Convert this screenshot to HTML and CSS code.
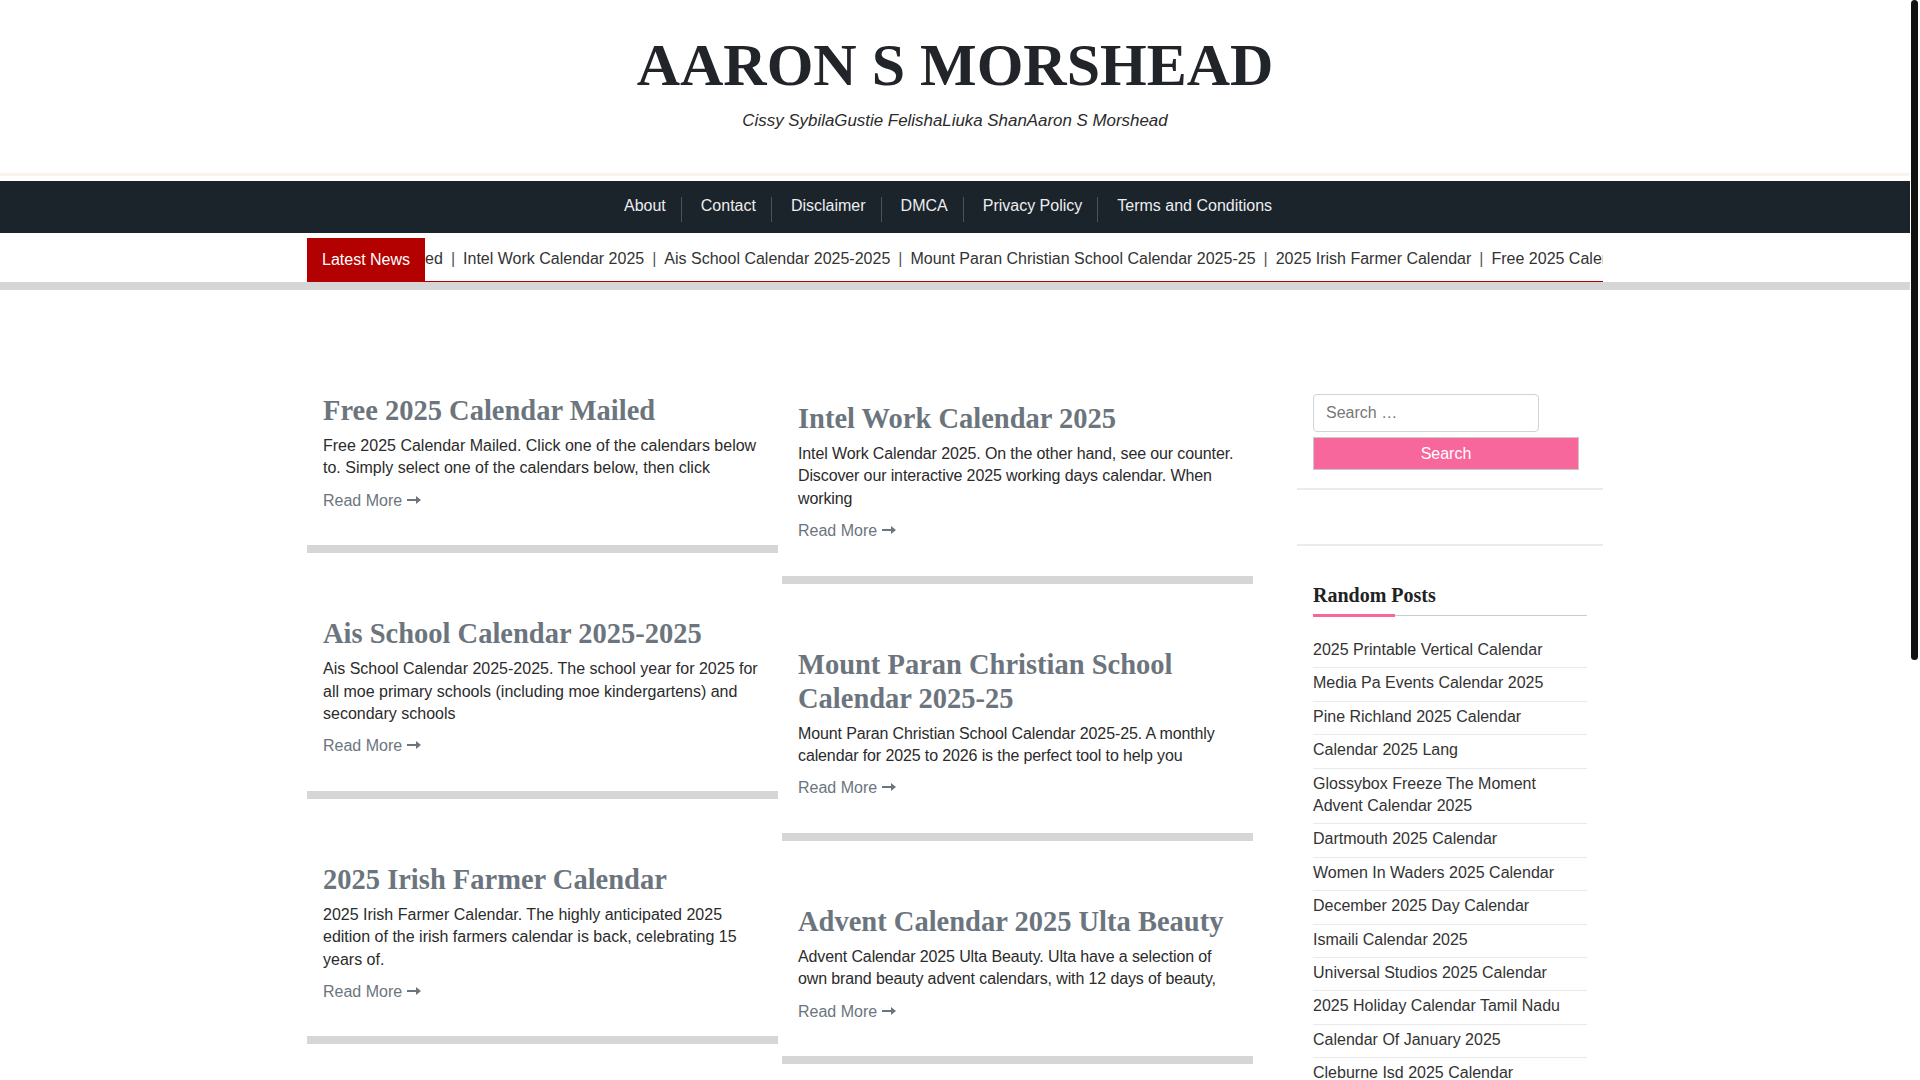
FILE: index.html
```html
<!DOCTYPE html>
<html lang="en">
<head>
<meta charset="utf-8">
<title>AARON S MORSHEAD</title>
<link rel="stylesheet" href="styles.css">
</head>
<body>
<div class="scroll-thumb"></div>
<header class="site-header">
  <h1 class="site-title">AARON S MORSHEAD</h1>
  <p class="site-tagline">Cissy SybilaGustie FelishaLiuka ShanAaron S Morshead</p>
</header>

<nav class="main-nav">
  <ul class="menu">
    <li><a href="#">About</a></li>
    <li><a href="#">Contact</a></li>
    <li><a href="#">Disclaimer</a></li>
    <li><a href="#">DMCA</a></li>
    <li><a href="#">Privacy Policy</a></li>
    <li><a href="#">Terms and Conditions</a></li>
  </ul>
</nav>

<div class="ticker-band">
  <div class="container ticker">
    <span class="ticker-label">Latest News</span>
    <div class="ticker-track">
      <a href="#">Free 2025 Calendar Mailed</a><span class="sep">|</span><a href="#">Intel Work Calendar 2025</a><span class="sep">|</span><a href="#">Ais School Calendar 2025-2025</a><span class="sep">|</span><a href="#">Mount Paran Christian School Calendar 2025-25</a><span class="sep">|</span><a href="#">2025 Irish Farmer Calendar</a><span class="sep">|</span><a href="#">Free 2025 Calendar Mailed</a><span class="sep">|</span><a href="#">Intel Work Calendar 2025</a>
    </div>
  </div>
</div>

<div class="container content">
  <main class="posts">
    <div class="post-col">
      <article class="card">
        <h2 class="card-title">Free 2025 Calendar Mailed</h2>
        <p class="card-excerpt">Free 2025 Calendar Mailed. Click one of the calendars below to. Simply select one of the calendars below, then click</p>
        <a class="read-more" href="#">Read More<svg class="arrow" width="14" height="8" viewBox="0 0 14 8"><path d="M0 3h9V0l5 4-5 4V5H0z"/></svg></a>
      </article>
      <article class="card">
        <h2 class="card-title">Ais School Calendar 2025-2025</h2>
        <p class="card-excerpt">Ais School Calendar 2025-2025. The school year for 2025 for all moe primary schools (including moe kindergartens) and secondary schools</p>
        <a class="read-more" href="#">Read More<svg class="arrow" width="14" height="8" viewBox="0 0 14 8"><path d="M0 3h9V0l5 4-5 4V5H0z"/></svg></a>
      </article>
      <article class="card">
        <h2 class="card-title">2025 Irish Farmer Calendar</h2>
        <p class="card-excerpt">2025 Irish Farmer Calendar. The highly anticipated 2025 edition of the irish farmers calendar is back, celebrating 15 years of.</p>
        <a class="read-more" href="#">Read More<svg class="arrow" width="14" height="8" viewBox="0 0 14 8"><path d="M0 3h9V0l5 4-5 4V5H0z"/></svg></a>
      </article>
      <article class="card">
        <h2 class="card-title">Dartmouth 2025 Calendar</h2>
        <p class="card-excerpt">Dartmouth 2025 Calendar. View the academic calendar, important dates and deadlines for the year ahead.</p>
        <a class="read-more" href="#">Read More<svg class="arrow" width="14" height="8" viewBox="0 0 14 8"><path d="M0 3h9V0l5 4-5 4V5H0z"/></svg></a>
      </article>
    </div>
    <div class="post-col shifted">
      <article class="card">
        <h2 class="card-title">Intel Work Calendar 2025</h2>
        <p class="card-excerpt">Intel Work Calendar 2025. On the other hand, see our counter. Discover our interactive 2025 working days calendar. When working</p>
        <a class="read-more" href="#">Read More<svg class="arrow" width="14" height="8" viewBox="0 0 14 8"><path d="M0 3h9V0l5 4-5 4V5H0z"/></svg></a>
      </article>
      <article class="card">
        <h2 class="card-title">Mount Paran Christian School Calendar 2025-25</h2>
        <p class="card-excerpt">Mount Paran Christian School Calendar 2025-25. A monthly calendar for 2025 to 2026 is the perfect tool to help you</p>
        <a class="read-more" href="#">Read More<svg class="arrow" width="14" height="8" viewBox="0 0 14 8"><path d="M0 3h9V0l5 4-5 4V5H0z"/></svg></a>
      </article>
      <article class="card">
        <h2 class="card-title">Advent Calendar 2025 Ulta Beauty</h2>
        <p class="card-excerpt">Advent Calendar 2025 Ulta Beauty. Ulta have a selection of own brand beauty advent calendars, with 12 days of beauty,</p>
        <a class="read-more" href="#">Read More<svg class="arrow" width="14" height="8" viewBox="0 0 14 8"><path d="M0 3h9V0l5 4-5 4V5H0z"/></svg></a>
      </article>
      <article class="card">
        <h2 class="card-title">Ismaili Calendar 2025</h2>
        <p class="card-excerpt">Ismaili Calendar 2025. Find all the important dates, festivals and observances for the coming year.</p>
        <a class="read-more" href="#">Read More<svg class="arrow" width="14" height="8" viewBox="0 0 14 8"><path d="M0 3h9V0l5 4-5 4V5H0z"/></svg></a>
      </article>
    </div>
  </main>

  <aside class="sidebar">
    <section class="widget widget-search">
      <form class="search-form">
        <input class="search-field" type="search" placeholder="Search …">
        <button class="search-submit" type="button">Search</button>
      </form>
    </section>
    <section class="widget widget-empty"></section>
    <section class="widget widget-random">
      <h3 class="widget-title">Random Posts</h3>
      <ul class="random-list">
        <li><a href="#">2025 Printable Vertical Calendar</a></li>
        <li><a href="#">Media Pa Events Calendar 2025</a></li>
        <li><a href="#">Pine Richland 2025 Calendar</a></li>
        <li><a href="#">Calendar 2025 Lang</a></li>
        <li><a href="#">Glossybox Freeze The Moment Advent Calendar 2025</a></li>
        <li><a href="#">Dartmouth 2025 Calendar</a></li>
        <li><a href="#">Women In Waders 2025 Calendar</a></li>
        <li><a href="#">December 2025 Day Calendar</a></li>
        <li><a href="#">Ismaili Calendar 2025</a></li>
        <li><a href="#">Universal Studios 2025 Calendar</a></li>
        <li><a href="#">2025 Holiday Calendar Tamil Nadu</a></li>
        <li><a href="#">Calendar Of January 2025</a></li>
        <li><a href="#">Cleburne Isd 2025 Calendar</a></li>
        <li><a href="#">Free 2025 Calendar Mailed</a></li>
        <li><a href="#">Intel Work Calendar 2025</a></li>
      </ul>
    </section>
  </aside>
</div>
</body>
</html>
```

FILE: styles.css
```css
::-webkit-scrollbar {
  width: 10px;
}
::-webkit-scrollbar-track {
  background: #ffffff;
}
::-webkit-scrollbar-thumb {
  background: #111111;
  border-radius: 5px;
}

body {
  margin: 0;
  padding-right: 10px;
  background: #ffffff;
  color: #333333;
  font-family: "Liberation Sans", Arial, sans-serif;
  font-size: 16px;
}

a {
  text-decoration: none;
}

/* drawn scrollbar thumb, over the page edge */
.scroll-thumb {
  position: fixed;
  top: 0;
  right: 2px;
  z-index: 10;
  width: 7px;
  height: 660px;
  background: #111111;
  border-radius: 4px;
}

.container {
  width: 1296px;
  margin: 0 auto;
}

/* Header */
.site-header {
  text-align: center;
  padding: 29px 0 40px;
  border-bottom: 3px solid #faf5ec;
}

.site-title {
  margin: 0;
  font-family: "Liberation Serif", "Times New Roman", serif;
  font-weight: bold;
  font-size: 60px;
  line-height: 72px;
  color: #212529;
}

.site-tagline {
  margin: 8px 0 0;
  font-style: italic;
  font-size: 16.9px;
  line-height: 24px;
  color: #2b2b2b;
}

/* Navigation */
.main-nav {
  margin-top: 5px;
  height: 52px;
  box-sizing: border-box;
  padding-top: 16px;
  background: #1b232b;
}

.menu {
  list-style: none;
  margin: 0;
  padding: 0 18px 0 0;
  display: flex;
  justify-content: center;
}

.menu li {
  border-right: 1px solid #49515a;
  padding-bottom: 7px;
  line-height: 18px;
}

.menu li:last-child {
  border-right: none;
}

.menu a {
  display: block;
  padding: 0 15px 0 19px;
  color: #eceef0;
  font-size: 16px;
}

/* Ticker */
.ticker-band {
  margin-top: 5px;
  border-bottom: 8px solid #d6d6d6;
}

.ticker {
  position: relative;
  height: 43px;
  overflow: hidden;
  border-bottom: 1px solid #b30000;
}

.ticker-label {
  position: absolute;
  left: 0;
  top: 0;
  z-index: 2;
  height: 43px;
  padding: 0 15px;
  line-height: 43px;
  background: #b30000;
  color: #ffffff;
  font-size: 16px;
}

.ticker-track {
  white-space: nowrap;
  line-height: 42px;
  font-size: 16px;
  transform: translateX(-58px);
}

.ticker-track a {
  color: #333333;
}

.ticker-track .sep {
  margin: 0 8px;
  color: #555555;
}

/* Content */
.content {
  display: flex;
  align-items: flex-start;
  padding-top: 71px;
}

.posts {
  width: 946px;
  display: flex;
  gap: 4px;
  align-items: flex-start;
}

.post-col {
  width: 471px;
}

.post-col.shifted {
  margin-top: 8px;
}

.card {
  padding: 33px 16px;
  border-bottom: 8px solid #d6d6d6;
  margin-bottom: 31px;
}

.card-title {
  margin: 0 0 7px;
  font-family: "Liberation Serif", "Times New Roman", serif;
  font-weight: bold;
  font-size: 28.5px;
  line-height: 34px;
  color: #6c757d;
}

.card-excerpt {
  margin: 0 0 10px;
  font-size: 16px;
  line-height: 22.4px;
  color: #2b2b2b;
}

.post-col.shifted .card-excerpt {
  letter-spacing: -0.12px;
}

.read-more {
  display: block;
  font-size: 16px;
  line-height: 22.4px;
  color: #6c757d;
}

.read-more .arrow {
  margin-left: 5px;
  vertical-align: 2px;
  fill: #6c757d;
}

/* Sidebar */
.sidebar {
  width: 306px;
  margin-left: auto;
}

.widget-search {
  padding: 33px 16px 18px;
  border-bottom: 2px solid #ebebeb;
}

.search-form {
  margin: 0;
}

.search-field {
  display: block;
  box-sizing: border-box;
  width: 226px;
  height: 38px;
  margin: 0;
  padding: 0 12px;
  border: 1px solid #ced4da;
  border-radius: 4px;
  font-family: "Liberation Sans", Arial, sans-serif;
  font-size: 16px;
  color: #333333;
  background: #ffffff;
}

.search-field::placeholder {
  color: #777777;
}

.search-submit {
  display: block;
  box-sizing: border-box;
  width: 266px;
  height: 33px;
  margin: 5px 0 0;
  padding: 0;
  border: 1px solid #c9c9c9;
  background: #f8679b;
  color: #ffffff;
  font-family: "Liberation Sans", Arial, sans-serif;
  font-size: 16px;
}

.widget-empty {
  height: 54px;
  border-bottom: 2px solid #ebebeb;
}

.widget-random {
  padding: 37px 16px 0;
}

.widget-title {
  position: relative;
  margin: 0 0 19px;
  padding-bottom: 8px;
  border-bottom: 1px solid #cccccc;
  font-family: "Liberation Serif", "Times New Roman", serif;
  font-weight: bold;
  font-size: 20px;
  line-height: 24px;
  color: #222222;
}

.widget-title::after {
  content: "";
  position: absolute;
  left: 0;
  bottom: -2px;
  width: 82px;
  height: 3px;
  background: #f8679b;
}

.random-list {
  list-style: none;
  margin: 0;
  padding: 0;
}

.random-list li {
  padding: 4px 0 6px;
  border-bottom: 1px solid #e9e9e9;
  font-size: 16px;
  line-height: 22.4px;
}

.random-list a {
  color: #333333;
}
```
